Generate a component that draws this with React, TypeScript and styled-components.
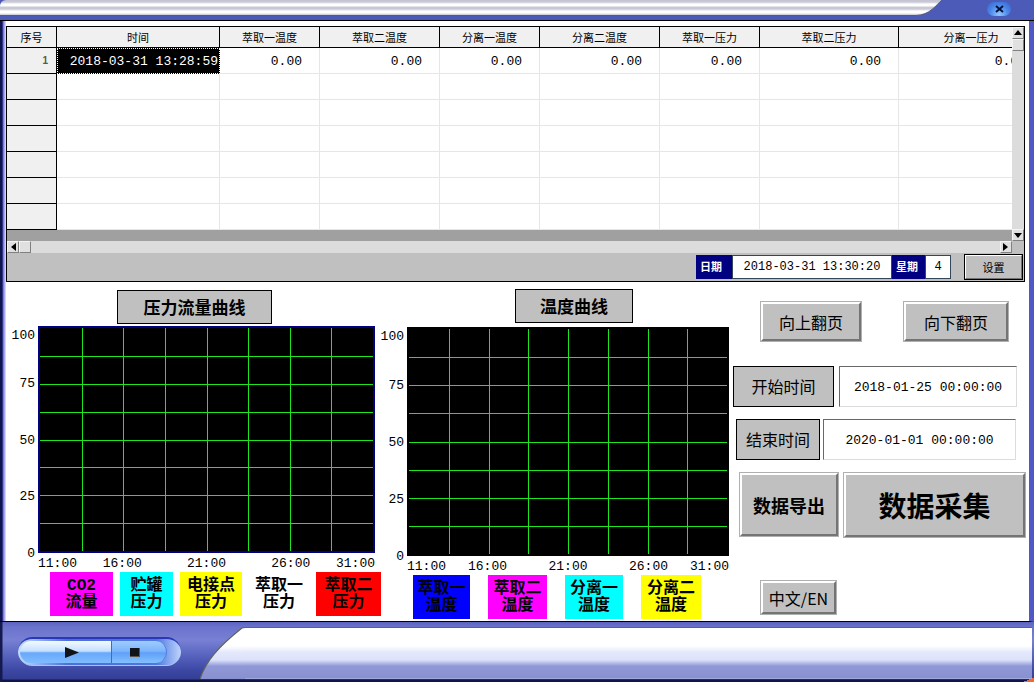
import React from "react";
import styled, { createGlobalStyle } from "styled-components";

const mono = `"Liberation Mono", "Noto Sans CJK SC", monospace`;
const sans = `"Noto Sans CJK SC", "Liberation Sans", sans-serif`;

const GlobalStyle = createGlobalStyle`
  * { box-sizing: border-box; }
  body { margin: 0; background: #0c1038; font-family: ${sans}; color: #000; }
  button, input { font: inherit; color: inherit; margin: 0; padding: 0; border-radius: 0; }
`;

const Window = styled.div`
  display: flex;
  flex-direction: column;
  min-height: 100vh;
  background: #4a56b4;
`;

const TitleBar = styled.header`
  display: flex;
  height: 21px;
  background: #4c5ab8;
  border-bottom: 1px solid #000;
`;

const SilverStrip = styled.div`
  flex: 1;
  height: 16px;
  border-top-left-radius: 6px;
  border-bottom: 1px solid #55597a;
  background: linear-gradient(#c4c4d4 0, #c8c8d6 2px, #fff 4px, #fff 6px, #c8c8d6 7px, #c8c8d6 9px, #fff 11px, #fff 13px, #c4c4d2 15px);
`;

const StripEnd = styled.svg`
  width: 26px;
  height: 16px;
`;

const TitleActions = styled.div`
  display: flex;
  justify-content: center;
  align-items: flex-start;
  width: 92px;
  padding: 2px 2px 0 24px;
`;

const CloseButton = styled.button`
  display: flex;
  align-items: center;
  justify-content: center;
  width: 24px;
  height: 14px;
  border: 0;
  border-radius: 12px;
  background: radial-gradient(ellipse at 50% 90%, #8cc8ff, #4a86e8 55%, #3560cc);
`;

const Body = styled.main`
  flex: 1;
  display: flex;
  flex-direction: column;
  padding: 5px 4px 0 6px;
  background: linear-gradient(90deg, #10164c 2px, #5058c4 3px, #a8a8f4 4px, #a8a8f4 5px, #fff 6px);
  border-right: 5px solid #5058c4;
  border-bottom: 1px solid #000;
`;

const GridPanel = styled.section`
  border: 1px solid #000;
  background: #c0c0c0;
`;

const GridArea = styled.div`
  display: grid;
  grid-template-columns: minmax(0, 1fr) 12px;
  grid-template-rows: 214px 12px;
`;

const GridViewport = styled.div`
  overflow: hidden;
  background: #a0a0a0;
`;

const Table = styled.table`
  table-layout: fixed;
  width: 100%;
  min-width: 1037px;
  border-collapse: separate;
  border-spacing: 0;
  background: #fff;
`;

const HeadCell = styled.th<{ $w: number }>`
  width: ${(p) => (p.$w ? p.$w + "px" : "auto")};
  height: 21px;
  padding: 0;
  border-right: 1px solid #000;
  border-bottom: 1px solid #000;
  background: #f0f0f0;
  font-size: 11px;
  line-height: 16px;
  font-weight: 400;
  text-align: center;
`;

const RowHead = styled.th`
  height: 26px;
  padding: 0 8px 0 0;
  border-right: 1px solid #000;
  border-bottom: 1px solid #000;
  background: #f0f0f0;
  color: #5a5a3c;
  font: 700 10px/12px "Liberation Sans", sans-serif;
  text-align: right;
`;

const Cell = styled.td<{ $selected?: boolean }>`
  height: 26px;
  padding: ${(p) => (p.$selected ? "2px 1px 0 0" : "2px 17px 0 0")};
  border-right: 1px solid #e6e6e6;
  border-bottom: 1px solid #e6e6e6;
  font: 13px/16px ${mono};
  text-align: right;
  white-space: nowrap;
  ${(p) =>
    p.$selected &&
    "background: #000; color: #fff; border: 1px dotted #fff;"}
`;

const ScrollTrack = styled.div<{ $vertical?: boolean }>`
  display: flex;
  flex-direction: ${(p) => (p.$vertical ? "column" : "row")};
  background: #dcdcdc;
`;

const ScrollButton = styled.button<{ $end?: boolean; $vertical?: boolean }>`
  display: flex;
  align-items: center;
  justify-content: center;
  width: 12px;
  height: 12px;
  border: 1px solid;
  border-color: #f4f4f4 #808080 #808080 #f4f4f4;
  background: #e0e0e0;
  ${(p) => p.$end && (p.$vertical ? "margin-top: auto;" : "margin-left: auto;")}
`;

const StatusBar = styled.div`
  display: flex;
  justify-content: flex-end;
  align-items: center;
  height: 28px;
  padding-right: 1px;
`;

const StatusLabel = styled.label<{ $w: number }>`
  width: ${(p) => p.$w}px;
  height: 24px;
  padding-left: 4px;
  background: #000080;
  color: #fff;
  font-size: 11px;
  line-height: 22px;
  font-weight: 700;
`;

const StatusInput = styled.input<{ $w: number }>`
  width: ${(p) => p.$w}px;
  height: 24px;
  border: 1px solid #33475c;
  background: #fff;
  font: 12px/16px ${mono};
  text-align: center;
`;

const Bevel = styled.button<{ $w: number; $h: number; $size?: number; $bold?: boolean }>`
  width: ${(p) => p.$w}px;
  height: ${(p) => p.$h}px;
  border: 3px solid;
  border-color: #fff #747474 #747474 #fff;
  outline: 1px solid #b0b0b0;
  outline-offset: -1px;
  background: #c0c0c0;
  font-family: ${sans};
  font-size: ${(p) => p.$size ?? 16}px;
  line-height: 1;
  font-weight: ${(p) => (p.$bold ? 700 : 400)};
  white-space: nowrap;
`;

const SetButton = styled(Bevel)`
  margin-left: 13px;
  border-width: 2px;
  outline: 1px solid #000;
  outline-offset: -1px;
`;

const Lower = styled.div`
  flex: 1;
  display: grid;
  grid-template-columns: 369fr 354fr 300px;
  margin-right: -4px;
`;

const Chart = styled.section<{ $top: number; $axis: number }>`
  display: grid;
  grid-template-columns: ${(p) => p.$axis}px minmax(0, 1fr);
  align-content: start;
  padding-top: ${(p) => p.$top}px;
`;

const ChartTitle = styled.h2<{ $w: number; $margin: string }>`
  grid-column: 2;
  justify-self: center;
  width: ${(p) => p.$w}px;
  height: 34px;
  margin: ${(p) => p.$margin};
  border: 1px solid #000;
  background: #c0c0c0;
  font-size: 17px;
  line-height: 32px;
  font-weight: 700;
  text-align: center;
`;

const YAxis = styled.div`
  display: grid;
  grid-template-rows: 16px 48fr 56fr 56fr 56fr;
  align-items: end;
  margin: 2px 3px -9px 0;
  font: 13px/16px ${mono};
  text-align: right;
`;

const Plot = styled.div<{ $edge: string; $h: number }>`
  height: ${(p) => p.$h}px;
  border: 2px solid ${(p) => p.$edge};
  background: #000;
`;

const PlotLines = styled.svg`
  display: block;
  width: 100%;
  height: 100%;
`;

const XAxis = styled.div`
  grid-column: 2;
  display: grid;
  grid-template-columns: 1fr 2fr 2fr 2fr 1fr;
  padding-top: 3px;
  font: 13px/16px ${mono};
  text-align: center;
  & > * { min-width: 0; }
  & > :first-child { text-align: left; }
  & > :last-child { text-align: right; }
`;

const Legend = styled.ul<{ $gap: number; $start: number }>`
  grid-column: 1 / -1;
  display: flex;
  gap: ${(p) => p.$gap}px;
  margin: 0;
  padding: 0 0 0 ${(p) => p.$start}px;
  list-style: none;
`;

const LegendItem = styled.li<{ $w: number; $color: string }>`
  flex: none;
  width: ${(p) => p.$w}px;
  height: 44px;
  padding-top: 6px;
  background: ${(p) => p.$color};
  font: 700 16px/17px ${mono};
  text-align: center;
  white-space: pre-line;
`;

const Controls = styled.aside`
  padding: 19px 3px 0 4px;
`;

const ControlRow = styled.div<{ $indent: number; $gap: number; $below: number }>`
  display: flex;
  gap: ${(p) => p.$gap}px;
  padding-left: ${(p) => p.$indent}px;
  margin-bottom: ${(p) => p.$below}px;
`;

const FieldLabel = styled.label<{ $w: number }>`
  width: ${(p) => p.$w}px;
  height: 41px;
  border: 1px solid #000;
  background: #c0c0c0;
  font-size: 16px;
  line-height: 39px;
  text-align: center;
`;

const FieldInput = styled.input<{ $w: number }>`
  width: ${(p) => p.$w}px;
  height: 41px;
  padding-top: 2px;
  border: 1px solid;
  border-color: #686868 #dcdcdc #dcdcdc #686868;
  background: #fff;
  font: 13px/16px ${mono};
  text-align: center;
`;

const Footer = styled.footer`
  display: flex;
  height: 60px;
  padding: 5px 2px 0 0;
  background:
    linear-gradient(160deg, transparent 50%, #f06838 50%) right bottom / 12px 4px no-repeat,
    linear-gradient(90deg, #141a50 2px, transparent 3px),
    linear-gradient(#5a64c0 0, #6a72cc 5px, #7880d4 18px, #5a66c0 32px, #3c48a4 48px, #343e94 57px, #10164c 58px);
`;

const Capsule = styled.div`
  display: flex;
  width: 163px;
  height: 29px;
  margin: 10px 19px 0 18px;
  padding: 2px 14px 2px 2px;
  border-radius: 15px;
  border-top: 2px solid #2a38b8;
  border-bottom: 1px solid #a8c4f4;
  background: linear-gradient(90deg, #c4dcff, #4c70d8 30%, #4c78e0 85%, #c0d4fc);
`;

const MediaButton = styled.button<{ $side: "left" | "right" }>`
  flex: ${(p) => (p.$side === "left" ? 92 : 55)};
  display: flex;
  align-items: center;
  justify-content: center;
  border: 0;
  padding-left: ${(p) => (p.$side === "left" ? 14 : 0)}px;
  padding-right: ${(p) => (p.$side === "left" ? 0 : 8)}px;
  border-radius: ${(p) => (p.$side === "left" ? "12px 0 0 12px" : "0 12px 12px 0")};
  border-right: 1px solid ${(p) => (p.$side === "left" ? "#5068a8" : "#5880e0")};
  background: ${(p) =>
    p.$side === "left"
      ? "linear-gradient(#f4faff, #c4e0ff 46%, #68a8fc 54%, #80bcff)"
      : "linear-gradient(#a0ccff, #7cb4fc 46%, #60a0f8 54%, #84c0ff)"};
`;

const PanelCap = styled.svg`
  width: 45px;
  height: 52px;
`;

const PanelFill = styled.div`
  flex: 1;
  height: 52px;
  border-top: 1px solid #60645c;
  border-bottom: 1px solid #a0a8dc;
  background: linear-gradient(#fff 0, #fff 18px, #e4e8fc 24px, #dce2fa 32px, #9098d8 38px, #8890d0 50px);
`;

const columns: [string, number][] = [
  ["序号", 50],
  ["时间", 163],
  ["萃取一温度", 100],
  ["萃取二温度", 120],
  ["分离一温度", 100],
  ["分离二温度", 120],
  ["萃取一压力", 100],
  ["萃取二压力", 139],
  ["分离一压力", 0],
];
const rows = [["2018-03-31 13:28:59", "0.00", "0.00", "0.00", "0.00", "0.00", "0.00", "0.00"]];
const emptyRows = 6;
const ticks = [1, 2, 3, 4, 5, 6, 7];
const times = ["11:00", "16:00", "21:00", "26:00", "31:00"];

const arrows = {
  up: "M4 1 8 6H0z",
  down: "M0 2H8L4 7z",
  left: "M2 4 7 0V8z",
  right: "M6 4 1 0V8z",
};

function Arrow({ to }: { to: keyof typeof arrows }) {
  return (
    <svg width="8" height="8" viewBox="0 0 8 8" aria-hidden="true">
      <path d={arrows[to]} />
    </svg>
  );
}

function GridLines() {
  return (
    <>
      {ticks.map((t) => (
        <React.Fragment key={t}>
          <rect x={`${t * 12.5}%`} y="0" width="1" height="100%" />
          <rect x="0" y={`${t * 12.5}%`} width="100%" height="1" />
        </React.Fragment>
      ))}
    </>
  );
}

type LegendEntry = { text: string; w: number; color: string };

type ChartProps = {
  title: string;
  titleWidth: number;
  titleMargin: string;
  top: number;
  axis: number;
  edge: string;
  plotHeight: number;
  legend: LegendEntry[];
  legendGap: number;
  legendStart: number;
};

function TrendChart(p: ChartProps) {
  return (
    <Chart $top={p.top} $axis={p.axis}>
      <ChartTitle $w={p.titleWidth} $margin={p.titleMargin}>{p.title}</ChartTitle>
      <YAxis>
        {[100, 75, 50, 25, 0].map((v) => (
          <span key={v}>{v}</span>
        ))}
      </YAxis>
      <Plot $edge={p.edge} $h={p.plotHeight}>
        <PlotLines fill="#1ee61e" shapeRendering="crispEdges">
          <GridLines />
        </PlotLines>
      </Plot>
      <XAxis>
        {times.map((t) => (
          <span key={t}>{t}</span>
        ))}
      </XAxis>
      <Legend $gap={p.legendGap} $start={p.legendStart}>
        {p.legend.map((l) => (
          <LegendItem key={l.text} $w={l.w} $color={l.color}>
            {l.text}
          </LegendItem>
        ))}
      </Legend>
    </Chart>
  );
}

export default function App() {
  return (
    <Window>
      <GlobalStyle />
      <TitleBar>
        <SilverStrip />
        <StripEnd viewBox="0 0 26 16">
          <defs>
            <linearGradient id="silver" x1="0" y1="0" x2="0" y2="1">
              <stop offset="0" stopColor="#c4c4d4" />
              <stop offset=".13" stopColor="#c8c8d6" />
              <stop offset=".26" stopColor="#fff" />
              <stop offset=".39" stopColor="#fff" />
              <stop offset=".45" stopColor="#c8c8d6" />
              <stop offset=".58" stopColor="#c8c8d6" />
              <stop offset=".71" stopColor="#fff" />
              <stop offset=".84" stopColor="#fff" />
              <stop offset=".97" stopColor="#c4c4d2" />
            </linearGradient>
          </defs>
          <path d="M0 0H26C20 5 14 15 0 15.500z" fill="url(#silver)" />
          <path d="M26 0C20 5 14 15 0 15.500" fill="none" stroke="#55597a" />
        </StripEnd>
        <TitleActions>
          <CloseButton aria-label="关闭">
            <svg width="9" height="8" viewBox="0 0 9 8" stroke="#06103c" strokeWidth="2">
              <path d="M1 1 8 7M8 1 1 7" />
            </svg>
          </CloseButton>
        </TitleActions>
      </TitleBar>

      <Body>
        <GridPanel>
          <GridArea>
            <GridViewport>
              <Table>
                <thead>
                  <tr>
                    {columns.map(([name, w]) => (
                      <HeadCell key={name} $w={w} scope="col">{name}</HeadCell>
                    ))}
                  </tr>
                </thead>
                <tbody>
                  {rows.map((row, r) => (
                    <tr key={r}>
                      <RowHead scope="row">{r + 1}</RowHead>
                      {row.map((v, c) => (
                        <Cell key={c} $selected={c === 0}>{v}</Cell>
                      ))}
                    </tr>
                  ))}
                  {Array.from({ length: emptyRows }, (_, r) => (
                    <tr key={r}>
                      <RowHead />
                      {columns.slice(1).map(([name]) => (
                        <Cell key={name} />
                      ))}
                    </tr>
                  ))}
                </tbody>
              </Table>
            </GridViewport>
            <ScrollTrack $vertical>
              <ScrollButton aria-label="向上滚动"><Arrow to="up" /></ScrollButton>
              <ScrollButton aria-label="垂直滑块" />
              <ScrollButton $end $vertical aria-label="向下滚动"><Arrow to="down" /></ScrollButton>
            </ScrollTrack>
            <ScrollTrack>
              <ScrollButton aria-label="向左滚动"><Arrow to="left" /></ScrollButton>
              <ScrollButton aria-label="水平滑块" />
              <ScrollButton $end aria-label="向右滚动"><Arrow to="right" /></ScrollButton>
            </ScrollTrack>
          </GridArea>
          <StatusBar>
            <StatusLabel $w={36} htmlFor="now">日期</StatusLabel>
            <StatusInput $w={160} id="now" readOnly defaultValue="2018-03-31 13:30:20" />
            <StatusLabel $w={33} htmlFor="weekday">星期</StatusLabel>
            <StatusInput $w={26} id="weekday" readOnly defaultValue="4" />
            <SetButton $w={59} $h={26} $size={11}>设置</SetButton>
          </StatusBar>
        </GridPanel>

        <Lower>
          <TrendChart
            title="压力流量曲线"
            titleWidth={155}
            titleMargin="0 24px 2px 0"
            top={8}
            axis={32}
            edge="#000080"
            plotHeight={227}
            legendStart={44}
            legendGap={7}
            legend={[
              { text: "CO2\n流量", w: 63, color: "#ff00ff" },
              { text: "贮罐\n压力", w: 53, color: "#00ffff" },
              { text: "电接点\n压力", w: 62, color: "#ffff00" },
              { text: "萃取一\n压力", w: 60, color: "#ffffff" },
              { text: "萃取二\n压力", w: 65, color: "#ff0000" },
            ]}
          />
          <TrendChart
            title="温度曲线"
            titleWidth={118}
            titleMargin="0 0 4px 12px"
            top={7}
            axis={32}
            edge="#000000"
            plotHeight={229}
            legendStart={38}
            legendGap={18}
            legend={[
              { text: "萃取一\n温度", w: 57, color: "#0000ff" },
              { text: "萃取二\n温度", w: 59, color: "#ff00ff" },
              { text: "分离一\n温度", w: 58, color: "#00ffff" },
              { text: "分离二\n温度", w: 60, color: "#ffff00" },
            ]}
          />
          <Controls>
            <ControlRow $indent={27} $gap={41} $below={24}>
              <Bevel $w={102} $h={41}>向上翻页</Bevel>
              <Bevel $w={106} $h={41}>向下翻页</Bevel>
            </ControlRow>
            <ControlRow $indent={0} $gap={5} $below={12}>
              <FieldLabel $w={101} htmlFor="start">开始时间</FieldLabel>
              <FieldInput $w={178} id="start" defaultValue="2018-01-25 00:00:00" />
            </ControlRow>
            <ControlRow $indent={3} $gap={3} $below={12}>
              <FieldLabel $w={84} htmlFor="end">结束时间</FieldLabel>
              <FieldInput $w={193} id="end" defaultValue="2020-01-01 00:00:00" />
            </ControlRow>
            <ControlRow $indent={6} $gap={4} $below={42}>
              <Bevel $w={100} $h={65} $size={18} $bold>数据导出</Bevel>
              <Bevel $w={183} $h={66} $size={28} $bold>数据采集</Bevel>
            </ControlRow>
            <ControlRow $indent={27} $gap={0} $below={5}>
              <Bevel $w={77} $h={35}>中文/EN</Bevel>
            </ControlRow>
          </Controls>
        </Lower>
      </Body>

      <Footer>
        <Capsule>
          <MediaButton $side="left" aria-label="运行">
            <svg width="14" height="11" viewBox="0 0 14 11"><path d="M0 0 14 5.500 0 11z" fill="#101418" /></svg>
          </MediaButton>
          <MediaButton $side="right" aria-label="停止">
            <svg width="10" height="9" viewBox="0 0 10 9">
              <path d="M0 0H10V9H0z" fill="#5c5448" />
              <path d="M0 0H9V8H0z" fill="#101418" />
            </svg>
          </MediaButton>
        </Capsule>
        <PanelCap viewBox="0 0 45 52">
          <defs>
            <linearGradient id="panel" x1="0" y1="0" x2="0" y2="1">
              <stop offset="0" stopColor="#fff" />
              <stop offset=".36" stopColor="#fff" />
              <stop offset=".48" stopColor="#e4e8fc" />
              <stop offset=".63" stopColor="#dce2fa" />
              <stop offset=".75" stopColor="#9098d8" />
              <stop offset="1" stopColor="#8890d0" />
            </linearGradient>
          </defs>
          <path d="M0 52C6 34 18 20 42 1Q43 .5 45 .5V52z" fill="url(#panel)" />
          <path d="M0 52C6 34 18 20 42 1Q43 .5 45 .5" fill="none" stroke="#60645c" strokeWidth="1.200" />
        </PanelCap>
        <PanelFill />
      </Footer>
    </Window>
  );
}
